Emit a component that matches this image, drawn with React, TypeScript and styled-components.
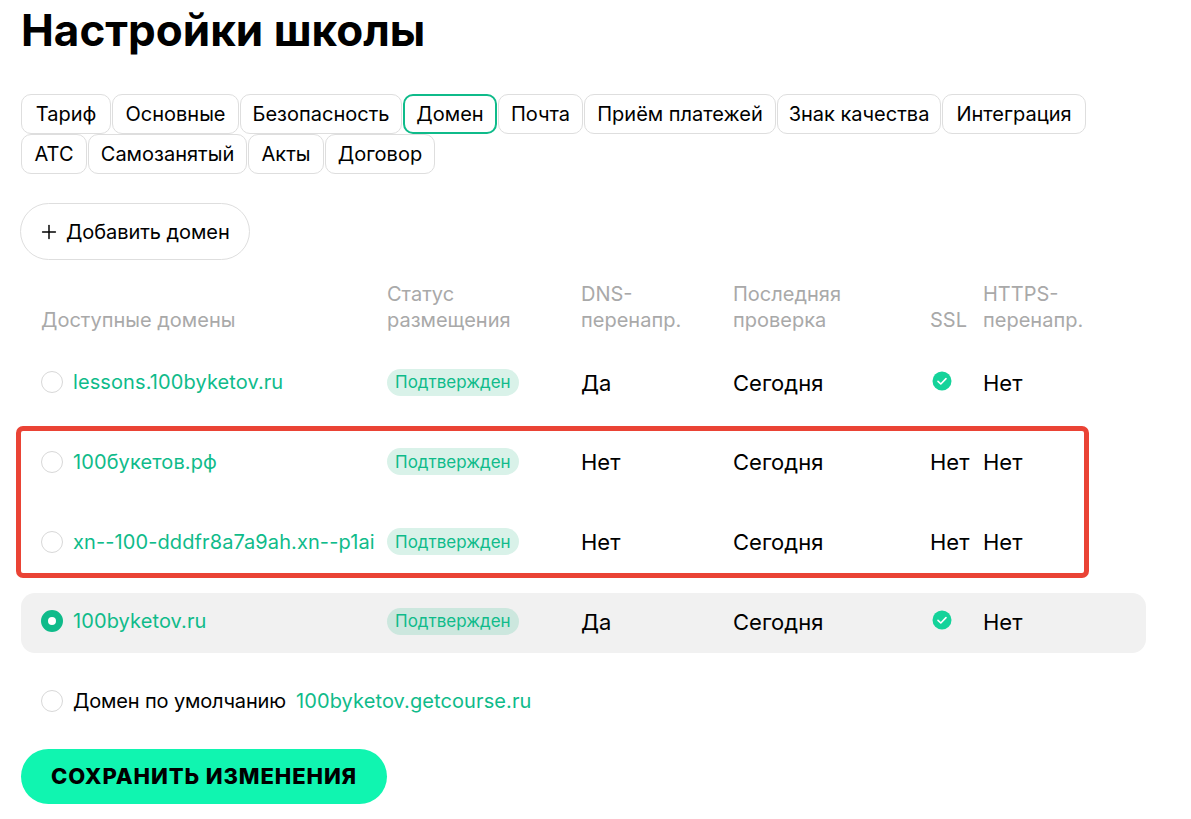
import styled, { createGlobalStyle } from 'styled-components'
import { Plus } from 'lucide-react'

const TABS = [
  { label: 'Тариф', width: 90 },
  { label: 'Основные', width: 127 },
  { label: 'Безопасность', width: 162 },
  { label: 'Домен', width: 94, active: true },
  { label: 'Почта', width: 85 },
  { label: 'Приём платежей', width: 192 },
  { label: 'Знак качества', width: 164 },
  { label: 'Интеграция', width: 144 },
  { label: 'АТС', width: 66 },
  { label: 'Самозанятый', width: 159 },
  { label: 'Акты', width: 76 },
  { label: 'Договор', width: 110 },
]

const DOMAINS = [
  { name: 'lessons.100byketov.ru', dns: 'Да', ssl: true },
  { name: '100букетов.рф', dns: 'Нет', ssl: false },
  { name: 'xn--100-dddfr8a7a9ah.xn--p1ai', dns: 'Нет', ssl: false },
  { name: '100byketov.ru', dns: 'Да', ssl: true, selected: true },
]

function SslCheck() {
  return (
    <CheckIcon width="20" height="20" viewBox="0 0 20 20">
      <circle cx="10" cy="10" r="9.5" fill="#14d39a" />
      <path d="M6 10.4l2.8 2.6L14 7.6" fill="none" stroke="#fff" strokeWidth="1.6" strokeLinecap="round" strokeLinejoin="round" />
    </CheckIcon>
  )
}

export default function App() {
  return (
    <>
      <GlobalStyle />
      <Page>
        <PageTitle>Настройки школы</PageTitle>

        <Tabs>
          {TABS.map((tab) => (
            <Tab key={tab.label} $active={tab.active} $width={tab.width}>
              {tab.label}
            </Tab>
          ))}
        </Tabs>

        <AddButton>
          <Plus size={22} strokeWidth={1.6} />
          Добавить домен
        </AddButton>

        <HeaderRow>
          <HeaderCell>Доступные домены</HeaderCell>
          <HeaderCell>
            Статус
            <br />
            размещения
          </HeaderCell>
          <HeaderCell>
            DNS-
            <br />
            перенапр.
          </HeaderCell>
          <HeaderCell>
            Последняя
            <br />
            проверка
          </HeaderCell>
          <HeaderCell>SSL</HeaderCell>
          <HeaderCell>
            HTTPS-
            <br />
            перенапр.
          </HeaderCell>
        </HeaderRow>

        <Rows>
          {DOMAINS.map((domain) => (
            <Row key={domain.name} $selected={domain.selected}>
              <NameCell>
                <Radio $checked={domain.selected} />
                <DomainLink>{domain.name}</DomainLink>
              </NameCell>
              <div>
                <Badge $selected={domain.selected}>Подтвержден</Badge>
              </div>
              <Value>{domain.dns}</Value>
              <Value>Сегодня</Value>
              <Value>{domain.ssl ? <SslCheck /> : 'Нет'}</Value>
              <Value>Нет</Value>
            </Row>
          ))}
          <DefaultRow>
            <Radio />
            <DefaultLabel>Домен по умолчанию</DefaultLabel>
            <DomainLink>100byketov.getcourse.ru</DomainLink>
          </DefaultRow>
          <Highlight />
        </Rows>

        <SaveButton>Сохранить изменения</SaveButton>
      </Page>
    </>
  )
}

const GlobalStyle = createGlobalStyle`
  * {
    box-sizing: border-box;
  }

  body {
    margin: 0;
    background: #fff;
    color: #000;
    font-family: 'Inter', 'Liberation Sans', sans-serif;
  }
`

const COLUMNS = '346px 194px 152px 197px 53px 1fr'

const Page = styled.div`
  width: 1191px;
  height: 819px;
  overflow: hidden;
  padding: 0 45px 0 21px;
`

const PageTitle = styled.h1`
  margin: 0;
  height: 60px;
  font-size: 44px;
  line-height: 60px;
  font-weight: 700;
`

const Tabs = styled.div`
  display: flex;
  flex-wrap: wrap;
  width: 1080px;
  margin-top: 34px;
`

const Tab = styled.div<{ $active?: boolean; $width: number }>`
  width: ${({ $width }) => $width}px;
  height: 40px;
  margin-right: 1px;
  display: flex;
  align-items: center;
  justify-content: center;
  font-size: 20px;
  white-space: nowrap;
  border: ${({ $active }) => ($active ? '2px solid #0fbb8a' : '1px solid #dedede')};
  border-radius: 10px;
`

const AddButton = styled.button`
  display: flex;
  align-items: center;
  gap: 6px;
  width: 230px;
  height: 57px;
  margin: 29px 0 0 -1px;
  padding: 0 0 0 17px;
  background: #fff;
  color: #000;
  font-family: inherit;
  font-size: 20px;
  letter-spacing: -0.05px;
  border: 1px solid #dedede;
  border-radius: 29px;
`

const HeaderRow = styled.div`
  display: grid;
  grid-template-columns: ${COLUMNS};
  align-items: end;
  margin-top: 21px;
  padding-left: 20px;
`

const HeaderCell = styled.div`
  font-size: 20px;
  line-height: 26px;
  color: #a9a9a9;
`

const Rows = styled.div`
  position: relative;
  display: flex;
  flex-direction: column;
  gap: 19.67px;
  margin-top: 21.34px;
`

const Row = styled.div<{ $selected?: boolean }>`
  display: grid;
  grid-template-columns: ${COLUMNS};
  align-items: center;
  height: 60px;
  padding: 0 0 4px 20px;
  background: ${({ $selected }) => ($selected ? '#f1f1f1' : 'transparent')};
  border-radius: 14px;
`

const DefaultRow = styled.div`
  display: flex;
  align-items: center;
  gap: 10px;
  height: 60px;
  padding: 0 0 4px 20px;
`

const NameCell = styled.div`
  display: flex;
  align-items: center;
  gap: 10px;
`

const Radio = styled.span<{ $checked?: boolean }>`
  flex-shrink: 0;
  width: 22px;
  height: 22px;
  background: #fff;
  border: ${({ $checked }) => ($checked ? '7px solid #0fbb8a' : '1px solid #d8d8d8')};
  border-radius: 50%;
`

const DomainLink = styled.span`
  font-size: 20px;
  letter-spacing: 0.1px;
  color: #0fbb8a;
  white-space: nowrap;
`

const DefaultLabel = styled.span`
  font-size: 20px;
  letter-spacing: -0.15px;
  white-space: nowrap;
`

const Badge = styled.span<{ $selected?: boolean }>`
  display: inline-flex;
  align-items: center;
  height: 27px;
  padding: 0 8px;
  font-size: 17px;
  color: #0fbb8a;
  background: ${({ $selected }) => ($selected ? '#cce7de' : '#d9f2e9')};
  border-radius: 14px;
`

const Value = styled.div`
  display: flex;
  align-items: center;
  padding-top: 1px;
  font-size: 22px;
  white-space: nowrap;
`

const CheckIcon = styled.svg`
  margin: -4px 0 0 2px;
`

const Highlight = styled.div`
  position: absolute;
  top: 71.66px;
  left: -5px;
  width: 1073px;
  height: 152px;
  border: 5px solid #ea4335;
  border-radius: 7px;
  pointer-events: none;
`

const SaveButton = styled.button`
  display: block;
  width: 366px;
  height: 55px;
  margin-top: 16px;
  padding: 0;
  background: #10f5b0;
  color: #000;
  font-family: inherit;
  font-size: 22px;
  font-weight: 800;
  letter-spacing: 0.9px;
  text-transform: uppercase;
  border: none;
  border-radius: 28px;
`
